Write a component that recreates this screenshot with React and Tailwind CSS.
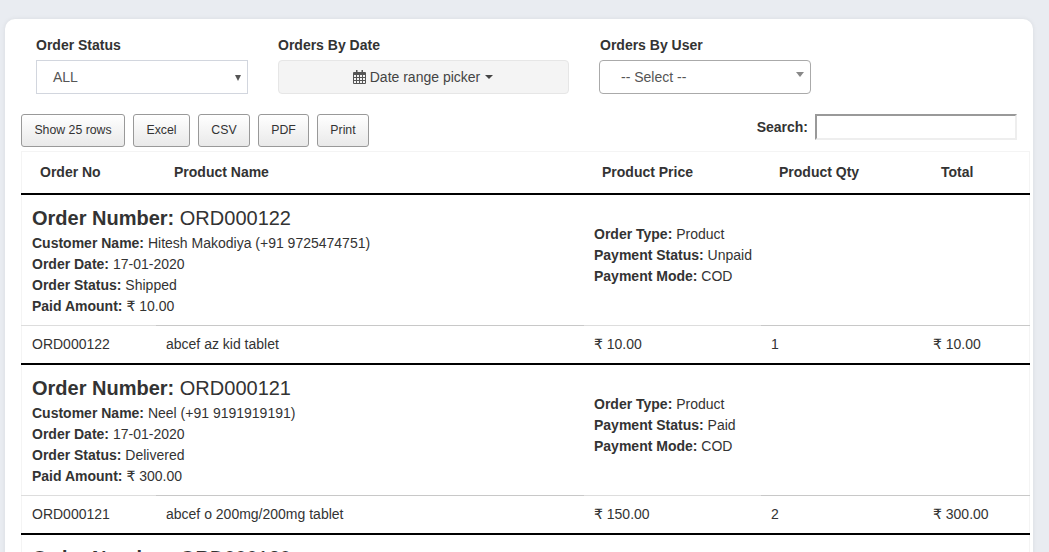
import React from "react";

const orders = [
  { no: "ORD000122", name: "Hitesh Makodiya (+91 9725474751)", date: "17-01-2020", status: "Shipped", paid: "₹ 10.00", pay: "Unpaid", product: "abcef az kid tablet", price: "₹ 10.00", qty: "1", total: "₹ 10.00" },
  { no: "ORD000121", name: "Neel (+91 9191919191)", date: "17-01-2020", status: "Delivered", paid: "₹ 300.00", pay: "Paid", product: "abcef o 200mg/200mg tablet", price: "₹ 150.00", qty: "2", total: "₹ 300.00" },
];

function Calendar() {
  return (
    <svg width="13" height="14" viewBox="0 0 13 14" className="-ml-px mr-[4px]" fill="#555">
      <path fillRule="evenodd" d="M3 0h1.5v2h4V0H10v2h2a1 1 0 0 1 1 1v10a1 1 0 0 1-1 1H1a1 1 0 0 1-1-1V3a1 1 0 0 1 1-1h2V0zM1 5v2h2V5H1zm3 0v2h2V5H4zm3 0v2h2V5H7zm3 0v2h2V5h-2zM1 8v2h2V8H1zm3 0v2h2V8H4zm3 0v2h2V8H7zm3 0v2h2V8h-2zM1 11v2h2v-2H1zm3 0v2h2v-2H4zm3 0v2h2v-2H7zm3 0v2h2v-2h-2z" />
    </svg>
  );
}

function Btn({ children, w }) {
  return (
    <button className={`${w} h-[33px] rounded-[3px] border border-[#999] bg-gradient-to-b from-white to-[#e9e9e9] text-[12.3px] text-[#333] flex items-center justify-center`}>
      {children}
    </button>
  );
}

function Cell({ w, pad, border, children }) {
  return <div className={`${w} ${pad} h-full border-t flex items-center ${border}`}>{children}</div>;
}

function Order({ o }) {
  return (
    <div className="shadow-[inset_1px_0_0_#f4f4f4,inset_-1px_0_0_#f4f4f4]">
      <div className="flex h-[132px] border-t-[2px] border-black">
        <div className="w-[562px] pl-[11px] pt-[11px]">
          <div className="text-[20px] leading-[24px] mb-[3px]"><b>Order Number:</b> {o.no}</div>
          <div><b>Customer Name:</b> {o.name}</div>
          <div><b>Order Date:</b> {o.date}</div>
          <div><b>Order Status:</b> {o.status}</div>
          <div><b>Paid Amount:</b> {o.paid}</div>
        </div>
        <div className="pl-[11px] pt-[29px]">
          <div><b>Order Type:</b> Product</div>
          <div><b>Payment Status:</b> {o.pay}</div>
          <div><b>Payment Mode:</b> COD</div>
        </div>
      </div>
      <div className="flex h-[38px] items-center">
        <Cell w="w-[135px]" pad="pl-[11px]" border="border-[#dddddd]">{o.no}</Cell>
        <Cell w="w-[428px]" pad="pl-[10px]" border="border-[#c8c8c8]">{o.product}</Cell>
        <Cell w="w-[177px]" pad="pl-[10px]" border="border-[#dddddd]">{o.price}</Cell>
        <Cell w="w-[162px]" pad="pl-[10px]" border="border-[#c8c8c8]">{o.qty}</Cell>
        <Cell w="w-[107px]" pad="pl-[10px]" border="border-[#c8c8c8]">{o.total}</Cell>
      </div>
    </div>
  );
}

export default function App() {
  return (
    <div className="h-[552px] overflow-hidden bg-[#e9ecf1] pt-[19px] pl-[5px] text-[14px] leading-[21px] text-[#333]" style={{ fontFamily: '"Liberation Sans", "DejaVu Sans", sans-serif' }}>
      <div className="w-[1028px] h-[600px] rounded-t-[10px] bg-white pl-[16px] pr-[3px] shadow-[0_0_5px_rgba(0,0,0,0.07)]">
        <div className="flex pl-[15px] pt-[16px]">
          <div className="w-[212px]">
            <div className="font-bold leading-[20px] mb-[5px]">Order Status</div>
            <div className="relative h-[34px] border border-[#d2d6de] pl-[16px] flex items-center text-[#555]">
              ALL
              <span className="absolute right-[6px] top-[14px] w-0 h-0 border-x-[3px] border-x-transparent border-t-[6px] border-t-[#555]" />
            </div>
          </div>
          <div className="w-[291px] ml-[30px]">
            <div className="font-bold leading-[20px] mb-[5px]">Orders By Date</div>
            <div className="h-[34px] rounded-[4px] border border-[#e6e6e6] bg-[#f4f4f4] flex items-center justify-center text-[#444]">
              <Calendar />
              Date range picker
              <span className="ml-[5px] w-0 h-0 border-x-[4px] border-x-transparent border-t-[4px] border-t-[#444]" />
            </div>
          </div>
          <div className="w-[212px] ml-[30px]">
            <div className="font-bold leading-[20px] mb-[5px] pl-px">Orders By User</div>
            <div className="relative h-[34px] rounded-[4px] border border-[#aaaaaa] pl-[21px] flex items-center text-[#555]">
              -- Select --
              <span className="absolute right-[6px] top-[11px] w-0 h-0 border-x-[4px] border-x-transparent border-t-[5px] border-t-[#888]" />
            </div>
          </div>
        </div>
        <div className="flex justify-between mt-[20px] pr-[13px]">
          <div className="flex gap-[8px]">
            <Btn w="w-[104px]">Show 25 rows</Btn>
            <Btn w="w-[57px]">Excel</Btn>
            <Btn w="w-[52px]">CSV</Btn>
            <Btn w="w-[51px]">PDF</Btn>
            <Btn w="w-[52px]">Print</Btn>
          </div>
          <div className="flex items-start gap-[7px]">
            <span className="font-bold leading-[26px]">Search:</span>
            <div className="w-[202px] h-[26px] border-2 border-t-[#999] border-l-[#999] border-r-[#eee] border-b-[#eee]" />
          </div>
        </div>
        <div className="mt-[4px]">
          <div className="flex h-[42px] items-center font-bold border-t border-x border-[#f4f4f4]">
            <div className="w-[133px] pl-[18px]">Order No</div>
            <div className="w-[428px] pl-[19px]">Product Name</div>
            <div className="w-[177px] pl-[19px]">Product Price</div>
            <div className="w-[162px] pl-[19px]">Product Qty</div>
            <div className="pl-[19px]">Total</div>
          </div>
          {orders.map((o) => <Order key={o.no} o={o} />)}
          <div className="border-t-[2px] border-black pl-[11px] pt-[11px] text-[20px] leading-[24px] shadow-[inset_1px_0_0_#f4f4f4,inset_-1px_0_0_#f4f4f4]"><b>Order Number:</b> ORD000120</div>
        </div>
      </div>
    </div>
  );
}
